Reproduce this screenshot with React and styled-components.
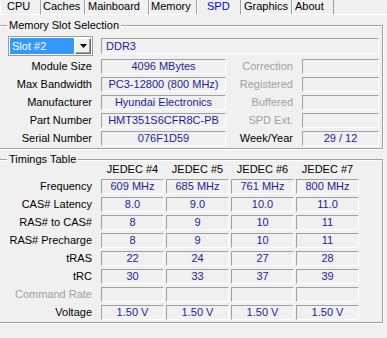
import React from 'react';
import styled, { createGlobalStyle } from 'styled-components';

const Global = createGlobalStyle`
  html, body { margin: 0; padding: 0; background: #f0f0f0; }
  body { font-family: "Liberation Sans", Arial, sans-serif; font-size: 11px; }
`;

const Window = styled.div`
  width: 387px;
  height: 338px;
  overflow: hidden;
  background: #f0f0f0;
  color: #000;
  font-family: "Liberation Sans", Arial, sans-serif;
  font-size: 11px;
  display: flex;
  flex-direction: column;
`;

const TabBar = styled.div`
  display: flex;
  height: 15px;
  flex: none;
`;

const Tab = styled.div`
  box-sizing: border-box;
  flex: none;
  width: ${(p) => p.$w}px;
  height: 15px;
  padding-left: ${(p) => p.$pad}px;
  border-left: 1px solid #fff;
  border-right: 1px solid #a0a0a0;
  border-bottom: 1px solid ${(p) => (p.$active ? 'transparent' : '#fff')};
  line-height: 13px;
  white-space: nowrap;
  color: ${(p) => (p.$active ? '#0000ff' : '#000')};
`;

const TabFill = styled.div`
  flex: 1;
  border-bottom: 1px solid #fff;
`;

const Panel = styled.div`
  display: flex;
  flex-direction: column;
`;

const Group = styled.section`
  box-sizing: border-box;
  width: 385px;
  margin: ${(p) => p.$mt}px 0 0 -2px;
  border: 1px solid #a0a0a0;
  box-shadow: inset 1px 1px 0 #fff, 1px 1px 0 #fff;
  padding: 0 3px 2px 1px;
`;

const GroupTitle = styled.div`
  width: max-content;
  margin: -7px 0 0 7px;
  padding: 0 2px;
  height: 13px;
  line-height: 13px;
  background: #f0f0f0;
  white-space: nowrap;
`;

const InfoGrid = styled.div`
  display: grid;
  grid-template-columns: 101px 125px 76px 77px;
  grid-template-rows: 20px repeat(5, 15px);
  row-gap: 3px;
  margin-top: 4px;
`;

const TimingGrid = styled.div`
  display: grid;
  grid-template-columns: 99px repeat(4, 63px);
  column-gap: 2px;
  grid-template-rows: 14px repeat(8, 15px);
  row-gap: 3px;
  margin-top: -4px;
`;

const Label = styled.div`
  padding-right: ${(p) => p.$pr}px;
  text-align: right;
  line-height: 15px;
  white-space: nowrap;
  color: ${(p) => (p.$dim ? '#a0a0a0' : '#000')};
`;

const Header = styled.div`
  text-align: center;
  line-height: 14px;
  white-space: nowrap;
`;

const Field = styled.div`
  box-sizing: border-box;
  height: ${(p) => p.$h || 15}px;
  align-self: center;
  grid-column: ${(p) => p.$span || 'auto'};
  border-style: solid;
  border-width: 1px;
  border-color: #a0a0a0 #fff #fff #a0a0a0;
  background: #f0f0f0;
  color: #1e1e96;
  line-height: ${(p) => (p.$h || 15) - 2}px;
  text-align: ${(p) => (p.$left ? 'left' : 'center')};
  padding: 0 4px;
  white-space: nowrap;
  overflow: hidden;
`;

const Select = styled.div`
  box-sizing: border-box;
  width: 85px;
  height: 20px;
  margin-left: 8px;
  align-self: center;
  display: flex;
  border: 1px solid #9a9a9a;
  padding: 1px;
  background: #fff;
`;

const SelectValue = styled.div`
  flex: 1;
  margin-right: 1px;
  background: #3399ff;
  color: #fff;
  padding-left: 2px;
  line-height: 16px;
  white-space: nowrap;
`;

const SelectButton = styled.div`
  box-sizing: border-box;
  width: 16px;
  height: 16px;
  display: flex;
  align-items: center;
  justify-content: center;
  background: #f0f0f0;
  border: 1px solid;
  border-color: #fff #696969 #696969 #fff;
  box-shadow: inset -1px -1px 0 #a0a0a0;
`;

const tabs = [
  { label: 'CPU', w: 41, pad: 6 },
  { label: 'Caches', w: 44, pad: 1 },
  { label: 'Mainboard', w: 64, pad: 2 },
  { label: 'Memory', w: 48, pad: 1 },
  { label: 'SPD', w: 44, pad: 9, active: true },
  { label: 'Graphics', w: 51, pad: 2 },
  { label: 'About', w: 42, pad: 2 },
];

const infoRows = [
  ['Module Size', '4096 MBytes', 'Correction', '', true],
  ['Max Bandwidth', 'PC3-12800 (800 MHz)', 'Registered', '', true],
  ['Manufacturer', 'Hyundai Electronics', 'Buffered', '', true],
  ['Part Number', 'HMT351S6CFR8C-PB', 'SPD Ext.', '', true],
  ['Serial Number', '076F1D59', 'Week/Year', '29 / 12', false],
];

const timingHeaders = ['JEDEC #4', 'JEDEC #5', 'JEDEC #6', 'JEDEC #7'];

const timingRows = [
  ['Frequency', ['609 MHz', '685 MHz', '761 MHz', '800 MHz']],
  ['CAS# Latency', ['8.0', '9.0', '10.0', '11.0']],
  ['RAS# to CAS#', ['8', '9', '10', '11']],
  ['RAS# Precharge', ['8', '9', '10', '11']],
  ['tRAS', ['22', '24', '27', '28']],
  ['tRC', ['30', '33', '37', '39']],
  ['Command Rate', ['', '', '', ''], true],
  ['Voltage', ['1.50 V', '1.50 V', '1.50 V', '1.50 V']],
];

function Arrow() {
  return (
    <svg width="7" height="4" viewBox="0 0 7 4">
      <polygon points="0,0 7,0 3.5,4" fill="#000" />
    </svg>
  );
}

export default function App() {
  return (
    <Window>
      <Global />
      <TabBar>
        {tabs.map((t) => (
          <Tab key={t.label} $w={t.w} $pad={t.pad} $active={t.active}>
            {t.label}
          </Tab>
        ))}
        <TabFill />
      </TabBar>
      <Panel>
        <Group $mt={10}>
          <GroupTitle>Memory Slot Selection</GroupTitle>
          <InfoGrid>
            <Select>
              <SelectValue>Slot #2</SelectValue>
              <SelectButton>
                <Arrow />
              </SelectButton>
            </Select>
            <Field $h={16} $left $span="2 / 5">DDR3</Field>
            {infoRows.map(([l, v, rl, rv, dim]) => (
              <React.Fragment key={l}>
                <Label $pr={9}>{l}</Label>
                <Field>{v}</Field>
                <Label $pr={9} $dim={dim}>{rl}</Label>
                <Field>{rv}</Field>
              </React.Fragment>
            ))}
          </InfoGrid>
        </Group>
        <Group $mt={10}>
          <GroupTitle>Timings Table</GroupTitle>
          <TimingGrid>
            <div />
            {timingHeaders.map((h) => (
              <Header key={h}>{h}</Header>
            ))}
            {timingRows.map(([l, vals, dim]) => (
              <React.Fragment key={l}>
                <Label $pr={7} $dim={dim}>{l}</Label>
                {vals.map((v, i) => (
                  <Field key={i}>{v}</Field>
                ))}
              </React.Fragment>
            ))}
          </TimingGrid>
        </Group>
      </Panel>
    </Window>
  );
}
